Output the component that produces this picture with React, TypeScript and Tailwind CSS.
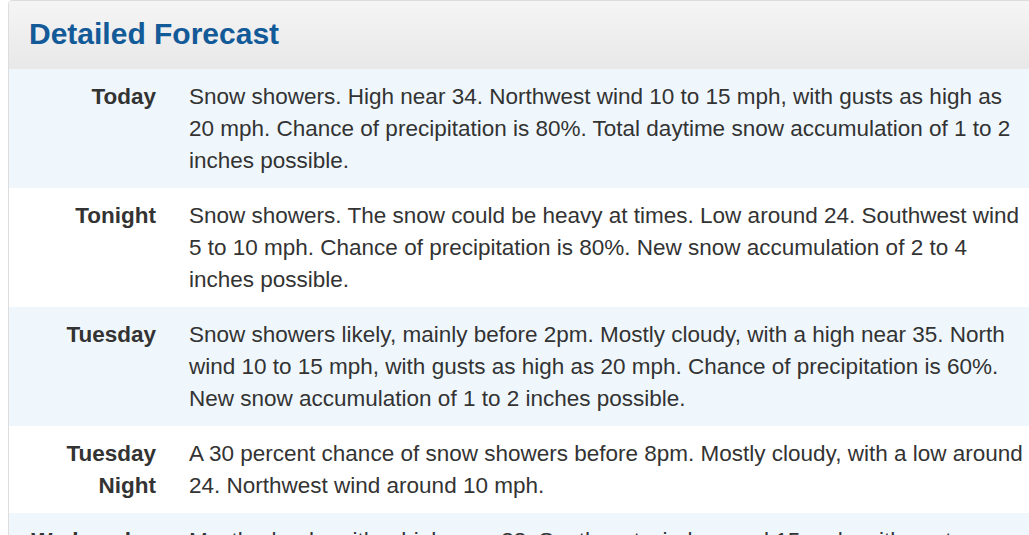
const rows = [
  {
    label: 'Today',
    text: 'Snow showers. High near 34. Northwest wind 10 to 15 mph, with gusts as high as 20 mph. Chance of precipitation is 80%. Total daytime snow accumulation of 1 to 2 inches possible.',
  },
  {
    label: 'Tonight',
    text: 'Snow showers. The snow could be heavy at times. Low around 24. Southwest wind 5 to 10 mph. Chance of precipitation is 80%. New snow accumulation of 2 to 4 inches possible.',
  },
  {
    label: 'Tuesday',
    text: 'Snow showers likely, mainly before 2pm. Mostly cloudy, with a high near 35. North wind 10 to 15 mph, with gusts as high as 20 mph. Chance of precipitation is 60%. New snow accumulation of 1 to 2 inches possible.',
  },
  {
    label: 'Tuesday Night',
    text: 'A 30 percent chance of snow showers before 8pm. Mostly cloudy, with a low around 24. Northwest wind around 10 mph.',
  },
  {
    label: 'Wednesday',
    text: 'Mostly cloudy, with a high near 38. Southeast wind around 15 mph, with gusts as high as 25 mph.',
  },
]

export default function App() {
  return (
    <div className="w-[1029px] h-[535px] overflow-hidden bg-white pl-2 font-['Liberation_Sans',Arial,sans-serif] text-[#333]">
      <div className="w-[1060px] border border-[#dddddd] rounded-t-[4px] overflow-hidden">
        {/* Header */}
        <div className="h-[68px] flex items-center px-5 pb-[3px] bg-gradient-to-b from-[#f5f5f5] to-[#e8e8e8]">
          <h2 className="text-[30px] font-bold leading-[33px] text-[#135a98]">Detailed Forecast</h2>
        </div>

        {/* Rows */}
        {rows.map((r, i) => (
          <div key={r.label} className={`flex pt-3 pb-[11px] ${i % 2 === 0 ? 'bg-[#eff7fd]' : 'bg-white'}`}>
            <div className="w-[147px] shrink-0 pl-3 text-right text-[22.5px] leading-8 font-bold">{r.label}</div>
            <div className="w-[837px] ml-[33px] text-[22.5px] leading-8">{r.text}</div>
          </div>
        ))}
      </div>
    </div>
  )
}
